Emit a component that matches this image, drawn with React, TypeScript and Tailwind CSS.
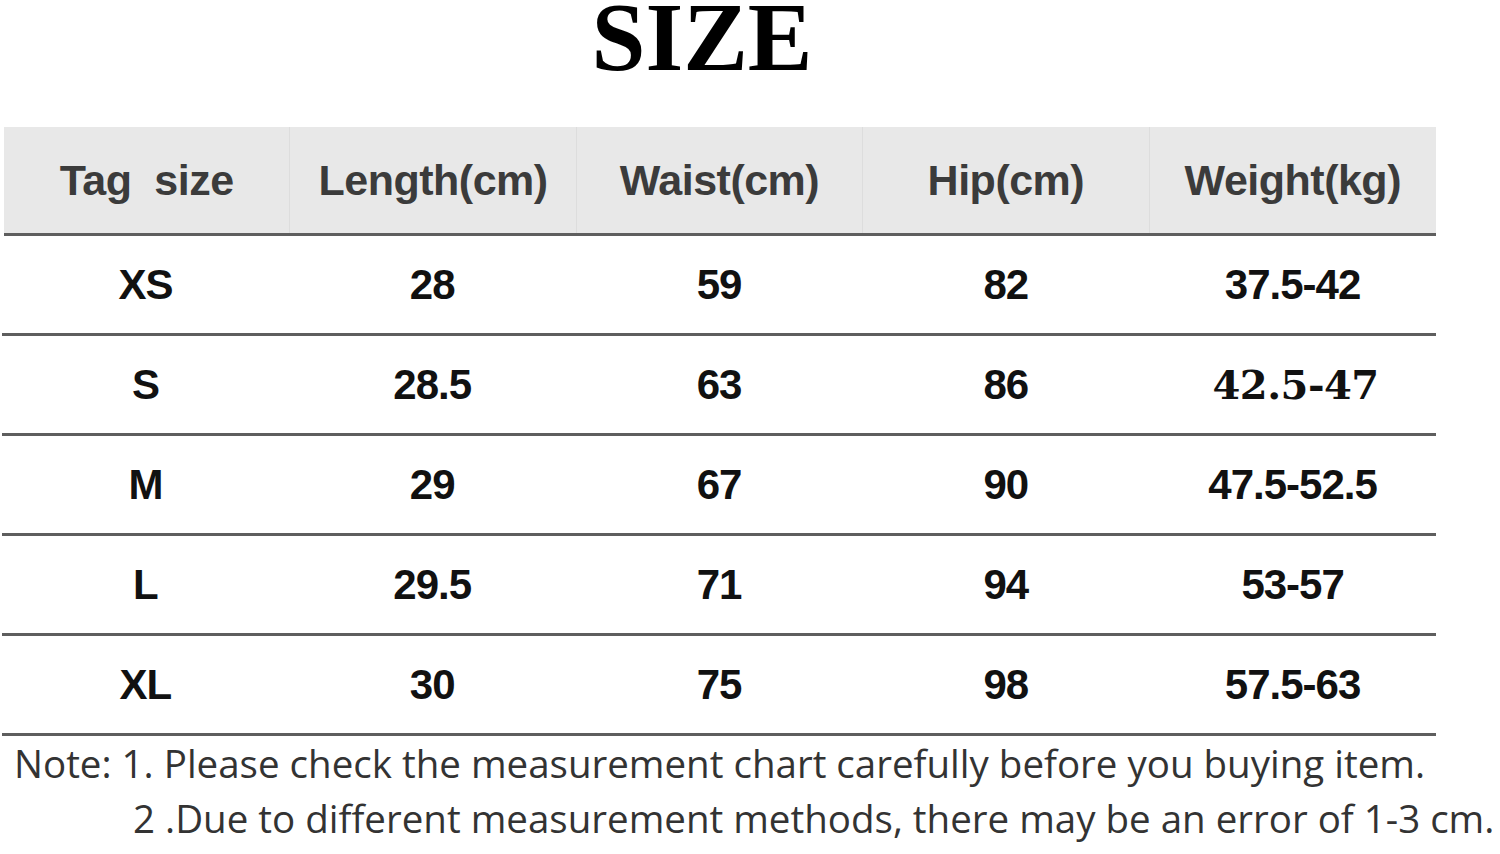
const HEADERS = ['Tag  size', 'Length(cm)', 'Waist(cm)', 'Hip(cm)', 'Weight(kg)'];

const ROWS: string[][] = [
  ['XS', '28', '59', '82', '37.5-42'],
  ['S', '28.5', '63', '86', '42.5-47'],
  ['M', '29', '67', '90', '47.5-52.5'],
  ['L', '29.5', '71', '94', '53-57'],
  ['XL', '30', '75', '98', '57.5-63'],
];

export default function App() {
  return (
    <div className="h-[854px] w-[1500px] overflow-hidden bg-white">
      {/* Title */}
      <div className="h-[127px] w-[1404px] pt-[1px] text-center">
        <span className="font-['Liberation_Serif',serif] text-[97px] font-bold leading-[74px] text-black">
          SIZE
        </span>
      </div>

      {/* Table */}
      <div className="ml-[2px] w-[1434px] font-['Liberation_Sans',Arial,sans-serif]">
        <div className="ml-[2px] grid h-[109px] grid-cols-5 border-b-[3px] border-[#5e5e5e] bg-[#e8e8e8]">
          {HEADERS.map((h, i) => (
            <div
              key={h}
              className={`flex items-center justify-center whitespace-pre text-[43px] font-bold tracking-[-0.5px] text-[#3b3b3b] ${
                i < HEADERS.length - 1 ? 'border-r border-[#dddddd]' : ''
              }`}
            >
              {h}
            </div>
          ))}
        </div>

        {ROWS.map((row) => (
          <div key={row[0]} className="grid h-[100px] grid-cols-5 border-b-[3px] border-[#5e5e5e]">
            {row.map((cell, i) => (
              <div
                key={i}
                className={`flex items-center justify-center text-[#111111] ${
                  row[0] === 'S' && i === 4
                    ? "pl-[6px] font-['DejaVu_Serif',serif] text-[40px] font-bold tracking-[-0.5px]"
                    : 'text-[42px] font-bold tracking-[-1px]'
                }`}
              >
                {cell}
              </div>
            ))}
          </div>
        ))}
      </div>

      {/* Note */}
      <div className="whitespace-nowrap font-['Open_Sans',sans-serif] text-[38.5px] leading-[55px] text-[#333333]">
        <p className="pl-[14px]">Note: 1. Please check the measurement chart carefully before you buying item.</p>
        <p className="pl-[133px]">2 .Due to different measurement methods, there may be an error of 1-3 cm.</p>
      </div>
    </div>
  );
}
